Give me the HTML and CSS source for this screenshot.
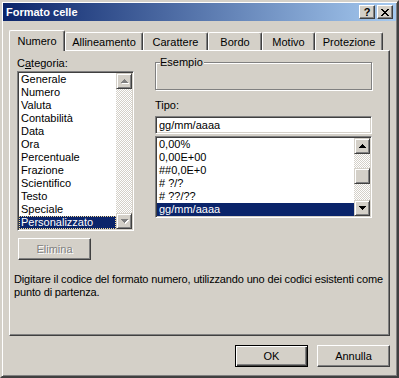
FILE: index.html
```html
<!DOCTYPE html>
<html lang="it">
<head>
  <meta charset="UTF-8">
  <title>Formato celle</title>
  <link rel="stylesheet" href="styles.css">
</head>
<body>
  <div class="window">
    <div class="titlebar">
      <span class="title">Formato celle</span>
      <div class="caption-buttons">
        <span class="cap-btn help">?</span>
        <span class="cap-btn">
          <svg width="8" height="7" viewBox="0 0 8 7"><path d="M0 0h2v1H0zM6 0h2v1H6zM1 1h2v1H1zM5 1h2v1H5zM2 2h4v1H2zM3 3h2v1H3zM2 4h4v1H2zM1 5h2v1H1zM5 5h2v1H5zM0 6h2v1H0zM6 6h2v1H6z"/></svg>
        </span>
      </div>
    </div>

    <div class="body">
      <div class="tabs">
        <div class="tab active" style="width:56px">Numero</div>
        <div class="tab" style="width:78px">Allineamento</div>
        <div class="tab" style="width:65px">Carattere</div>
        <div class="tab" style="width:54px">Bordo</div>
        <div class="tab" style="width:53px">Motivo</div>
        <div class="tab" style="width:68px">Protezione</div>
      </div>

      <div class="panel">
        <div class="panel-top">
          <div class="col-left">
            <div class="label">C<u>a</u>tegoria:</div>
            <div class="listbox cat-list">
              <ul class="items">
                <li>Generale</li>
                <li>Numero</li>
                <li>Valuta</li>
                <li>Contabilità</li>
                <li>Data</li>
                <li>Ora</li>
                <li>Percentuale</li>
                <li>Frazione</li>
                <li>Scientifico</li>
                <li>Testo</li>
                <li>Speciale</li>
                <li class="selected focus">Personalizzato</li>
              </ul>
              <div class="scrollbar">
                <div class="sb-btn disabled">
                  <svg width="8" height="5" viewBox="0 0 8 5"><path class="hl" d="M4 1h1v1H4zM3 2h3v1H3zM2 3h5v1H2zM1 4h7v1H1z"/><path class="sh" d="M3 0h1v1H3zM2 1h3v1H2zM1 2h5v1H1zM0 3h7v1H0z"/></svg>
                </div>
                <div class="sb-track"></div>
                <div class="sb-btn disabled">
                  <svg width="8" height="5" viewBox="0 0 8 5"><path class="hl" d="M1 1h7v1H1zM2 2h5v1H2zM3 3h3v1H3zM4 4h1v1H4z"/><path class="sh" d="M0 0h7v1H0zM1 1h5v1H1zM2 2h3v1H2zM3 3h1v1H3z"/></svg>
                </div>
              </div>
            </div>
            <button class="btn elimina" disabled>Elimina</button>
          </div>

          <div class="col-right">
            <div class="group">
              <span class="legend">Esempio</span>
            </div>
            <div class="label tipo-label">Tipo:</div>
            <div class="textbox">gg/mm/aaaa</div>
            <div class="listbox type-list">
              <ul class="items">
                <li>0,00%</li>
                <li>0,00E+00</li>
                <li>##0,0E+0</li>
                <li># ?/?</li>
                <li># ??/??</li>
                <li class="selected">gg/mm/aaaa</li>
              </ul>
              <div class="scrollbar">
                <div class="sb-btn">
                  <svg width="7" height="4" viewBox="0 0 7 4"><path d="M3 0h1v1H3zM2 1h3v1H2zM1 2h5v1H1zM0 3h7v1H0z"/></svg>
                </div>
                <div class="sb-track">
                  <div class="sb-thumb"></div>
                </div>
                <div class="sb-btn">
                  <svg width="7" height="4" viewBox="0 0 7 4"><path d="M0 0h7v1H0zM1 1h5v1H1zM2 2h3v1H2zM3 3h1v1H3z"/></svg>
                </div>
              </div>
            </div>
          </div>
        </div>

        <p class="desc">Digitare il codice del formato numero, utilizzando uno dei codici esistenti come<br>punto di partenza.</p>
      </div>

      <div class="actions">
        <button class="btn default">OK</button>
        <button class="btn">Annulla</button>
      </div>
    </div>
  </div>
</body>
</html>
```

FILE: styles.css
```css
* {
  box-sizing: border-box;
}
html, body {
  margin: 0;
  padding: 0;
  background: #d4d0c8;
}
body {
  font: 11px "Liberation Sans", Arial, sans-serif;
  color: #000;
}
.window {
  width: 399px;
  height: 378px;
  background: #d4d0c8;
  border: 2px solid;
  border-color: #d4d0c8 #404040 #404040 #d4d0c8;
  box-shadow: inset 1px 1px #fff, inset -1px -1px #808080;
  padding: 1px;
  display: flex;
  flex-direction: column;
}

/* title bar */
.titlebar {
  height: 18px;
  background: linear-gradient(to right, #0a246a, #a6caf0);
  display: flex;
  align-items: center;
  justify-content: space-between;
  padding: 0 3px 0 3px;
}
.title {
  color: #fff;
  font-weight: bold;
  font-size: 11px;
}
.caption-buttons {
  display: flex;
  gap: 2px;
}
.cap-btn {
  width: 16px;
  height: 14px;
  background: #d4d0c8;
  border: 1px solid;
  border-color: #fff #404040 #404040 #fff;
  box-shadow: inset -1px -1px #808080;
  display: flex;
  align-items: center;
  justify-content: center;
}
.cap-btn.help {
  font-weight: bold;
  font-size: 11px;
  line-height: 12px;
}

/* body */
.body {
  flex: 1;
  padding: 9px 6px 0 6px;
  display: flex;
  flex-direction: column;
}

/* tabs */
.tabs {
  display: flex;
  height: 21px;
  margin-bottom: -1px;
  position: relative;
  z-index: 1;
}
.tab {
  margin-top: 2px;
  height: 18px;
  border: 1px solid;
  border-bottom: none;
  border-color: #fff #404040 #fff #fff;
  border-radius: 2px 2px 0 0;
  box-shadow: inset -1px 0 #808080;
  background: #d4d0c8;
  text-align: center;
  line-height: 13px;
  padding-top: 3px;
}
.tab.active {
  margin-top: 0;
  height: 21px;
  padding-top: 4px;
}

/* panel */
.panel {
  height: 286px;
  border: 1px solid;
  border-color: #fff #404040 #404040 #fff;
  box-shadow: inset -1px -1px #808080;
  padding: 6px 0 0 4px;
}
.panel-top {
  display: flex;
}
.col-left {
  margin-left: 3px;
  width: 117px;
}
.col-right {
  margin-left: 21px;
  width: 217px;
}
.label {
  line-height: 13px;
}
.tipo-label {
  margin-top: 9px;
}

/* sunken boxes */
.listbox,
.textbox {
  background: #fff;
  border: 1px solid;
  border-color: #808080 #fff #fff #808080;
  box-shadow: inset 1px 1px #404040, inset -1px -1px #d4d0c8;
  padding: 1px;
}
.listbox {
  display: flex;
}
.cat-list {
  margin-top: 1px;
  height: 160px;
}
.type-list {
  margin-top: 2px;
  height: 82px;
}
.textbox {
  margin-top: 4px;
  height: 18px;
  line-height: 14px;
  padding-left: 3px;
}
.items {
  flex: 1;
  margin: 0;
  padding: 0;
  list-style: none;
  overflow: hidden;
}
.items li {
  line-height: 13px;
  height: 13px;
  padding-left: 2px;
  white-space: nowrap;
}
.items li.selected {
  background: #0a246a;
  color: #fff;
}
.items li.focus {
  outline: 1px dotted #f5db95;
  outline-offset: -1px;
}

/* scrollbar */
.scrollbar {
  width: 16px;
  display: flex;
  flex-direction: column;
}
.sb-btn,
.sb-thumb {
  height: 16px;
  background: #d4d0c8;
  border: 1px solid;
  border-color: #d4d0c8 #404040 #404040 #d4d0c8;
  box-shadow: inset 1px 1px #fff, inset -1px -1px #808080;
  display: flex;
  align-items: center;
  justify-content: center;
}
.sb-btn svg {
  fill: #000;
}
.sb-btn.disabled svg {
  margin: 1px 0 0 1px;
}
.sb-btn.disabled .hl {
  fill: #fff;
}
.sb-btn.disabled .sh {
  fill: #808080;
}
.sb-track {
  flex: 1;
  background: repeating-conic-gradient(#fff 0 25%, #d4d0c8 0 50%) 0 0 / 2px 2px;
}
.sb-thumb {
  margin-top: 14px;
}

/* group box */
.group {
  position: relative;
  margin-top: 5px;
  height: 28px;
  border: 1px solid #808080;
  box-shadow: inset 1px 1px #fff, 1px 1px #fff;
}
.legend {
  position: absolute;
  top: -7px;
  left: 4px;
  padding: 0 1px 0 0;
  background: #d4d0c8;
  line-height: 13px;
}

/* buttons */
.btn {
  width: 73px;
  height: 22px;
  padding: 0;
  font: inherit;
  color: #000;
  background: #d4d0c8;
  border: 1px solid;
  border-color: #fff #404040 #404040 #fff;
  box-shadow: inset -1px -1px #808080;
  border-radius: 0;
}
.btn.default {
  border-color: #000;
  box-shadow: inset 1px 1px #fff, inset -1px -1px #404040, inset -2px -2px #808080;
}
.btn:disabled {
  color: #808080;
  text-shadow: 1px 1px #fff;
}
.elimina {
  display: block;
  margin: 7px 0 0 1px;
}

.desc {
  margin: 13px 0 0 0;
  line-height: 13px;
  letter-spacing: -0.15px;
  white-space: nowrap;
}

.actions {
  display: flex;
  justify-content: flex-end;
  gap: 9px;
  margin-top: 9px;
}
```
